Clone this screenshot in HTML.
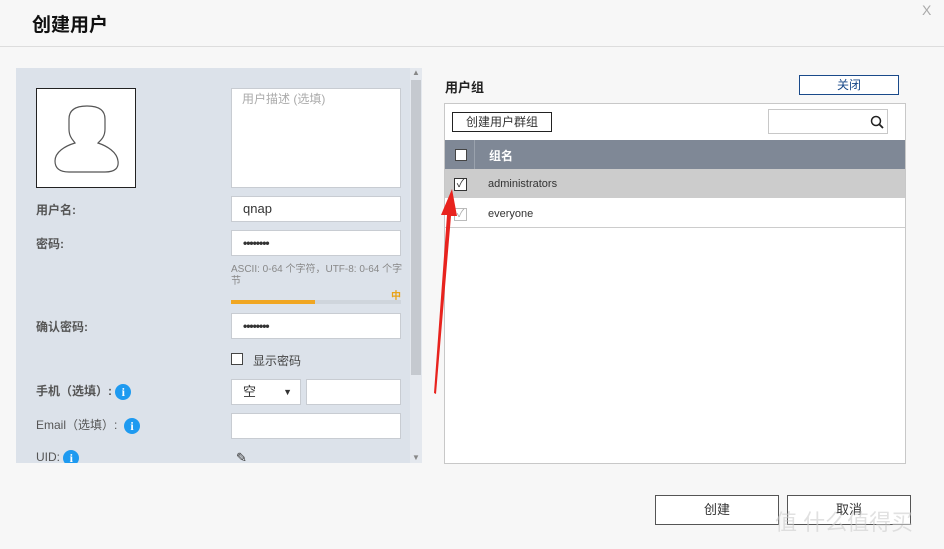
<!DOCTYPE html>
<html><head><meta charset="utf-8"><style>
*{box-sizing:border-box;margin:0;padding:0}
body{width:944px;height:549px;background:#f7f7f7;font-family:"Liberation Sans","Noto Sans CJK SC",sans-serif;position:relative;overflow:hidden;color:#333}
.a{position:absolute}
.inp{position:absolute;background:#fff;border:1px solid #c8ccd2;font-size:13px;padding-left:11px;line-height:24px}
.lbl{position:absolute;font-size:12px;color:#555;font-weight:bold}
.info{display:inline-block;width:16px;height:16px;border-radius:50%;background:#1e9af0;color:#fff;font-size:12px;text-align:center;line-height:16px;font-weight:bold;vertical-align:middle;font-family:"Liberation Serif",serif}
.btn{position:absolute;border:1px solid #555;background:#fff;font-size:13px;text-align:center}
.dots{font-size:12px;font-weight:bold;letter-spacing:-1px}
</style></head><body>
<div class="a" style="left:32px;top:10px;font-size:19px;font-weight:bold;color:#111">创建用户</div>
<div class="a" style="left:922px;top:2px;font-size:14px;color:#aaa">X</div>
<div class="a" style="left:0;top:46px;width:944px;height:1px;background:#ddd"></div>

<div class="a" style="left:16px;top:68px;width:406px;height:395px;background:#dce2ea"></div>
<div class="a" style="left:410px;top:68px;width:12px;height:395px;background:#e4e8ee"></div>
<div class="a" style="left:411px;top:80px;width:10px;height:295px;background:#c5c9cf"></div>
<div class="a" style="left:412px;top:68px;font-size:8px;color:#888">▲</div>
<div class="a" style="left:412px;top:453px;font-size:8px;color:#888">▼</div>

<div class="a" style="left:36px;top:88px;width:100px;height:100px;background:#fff;border:1px solid #222">
<svg width="100" height="100" viewBox="0 0 100 100"><path d="M50 17 C37 17 32 22 32 30 L32 40 C32 48 36 51 38 54 C28 57 18 63 18 72 C18 79 22 83 32 83 L68 83 C78 83 82 79 81 72 C80 63 70 57 61 54 C64 51 68 48 68 40 L68 30 C68 22 63 17 50 17 Z" fill="none" stroke="#555" stroke-width="1.2"/></svg></div>
<div class="inp" style="left:231px;top:88px;width:170px;height:100px;color:#aaa;font-size:12px;line-height:20px;padding-left:10px">用户描述 (选填)</div>

<div class="lbl" style="left:36px;top:201px">用户名:</div>
<div class="inp" style="left:231px;top:196px;width:170px;height:26px">qnap</div>
<div class="lbl" style="left:36px;top:235px">密码:</div>
<div class="inp dots" style="left:231px;top:230px;width:170px;height:26px">••••••••</div>
<div class="a" style="left:231px;top:264px;font-size:10px;color:#888;line-height:12px;width:175px">ASCII: 0-64 个字符，UTF-8: 0-64 个字节</div>
<div class="a" style="left:391px;top:287px;font-size:10px;color:#e8a317;font-weight:bold">中</div>
<div class="a" style="left:231px;top:300px;width:170px;height:4px;background:#cfd5dc"></div>
<div class="a" style="left:231px;top:300px;width:84px;height:4px;background:#f0a622"></div>
<div class="lbl" style="left:36px;top:318px">确认密码:</div>
<div class="inp dots" style="left:231px;top:313px;width:170px;height:26px">••••••••</div>
<div class="a" style="left:231px;top:353px;width:12px;height:12px;border:1px solid #444;background:#fff"></div>
<div class="a" style="left:253px;top:352px;font-size:12px;color:#444">显示密码</div>
<div class="lbl" style="left:36px;top:382px">手机（选填）: <span class="info">i</span></div>
<div class="inp" style="left:231px;top:379px;width:70px;height:26px">空<span style="position:absolute;right:8px;font-size:9px">▼</span></div>
<div class="inp" style="left:306px;top:379px;width:95px;height:26px"></div>
<div class="lbl" style="left:36px;top:416px;font-weight:normal">Email（选填）: &nbsp;<span class="info">i</span></div>
<div class="inp" style="left:231px;top:413px;width:170px;height:26px"></div>
<div class="lbl" style="left:36px;top:450px;font-weight:normal;height:13px;overflow:hidden">UID: <span class="info">i</span></div>
<div class="a" style="left:236px;top:450px;font-size:13px;color:#333;height:13px;overflow:hidden">✎</div>

<div class="a" style="left:445px;top:77px;font-size:13px;font-weight:bold;color:#222">用户组</div>
<div class="a" style="left:799px;top:75px;width:100px;height:20px;border:1px solid #1a4a8a;background:#fff;color:#1a4a8a;font-size:12px;text-align:center;line-height:18px">关闭</div>
<div class="a" style="left:444px;top:103px;width:462px;height:361px;border:1px solid #c8c8c8;background:#fff"></div>
<div class="btn" style="left:452px;top:112px;width:100px;height:20px;border-color:#222;font-size:12px;line-height:18px">创建用户群组</div>
<div class="a" style="left:768px;top:109px;width:120px;height:25px;border:1px solid #c8c8c8;background:#fff"><svg class="a" style="left:101px;top:5px" width="14" height="14"><circle cx="6" cy="6" r="4.5" fill="none" stroke="#222" stroke-width="1.5"/><path d="M9 9 L13 13" stroke="#222" stroke-width="1.8"/></svg></div>
<div class="a" style="left:445px;top:140px;width:460px;height:29px;background:#7f8896"></div>
<div class="a" style="left:474px;top:140px;width:1px;height:29px;background:#9aa2ad"></div>
<div class="a" style="left:455px;top:149px;width:12px;height:12px;background:#fff;border:1px solid #444"></div>
<div class="a" style="left:489px;top:147px;font-size:12px;color:#fff;font-weight:bold">组名</div>
<div class="a" style="left:445px;top:169px;width:460px;height:29px;background:#cccccc"></div>
<div class="a" style="left:454px;top:178px;width:13px;height:13px;background:#fff;border:1px solid #333;font-size:11px;line-height:11px;text-align:center">✓</div>
<div class="a" style="left:488px;top:178px;font-size:11px;color:#333">administrators</div>
<div class="a" style="left:454px;top:208px;width:13px;height:13px;border:1px solid #bbb;color:#aaa;font-size:11px;line-height:11px;text-align:center">✓</div>
<div class="a" style="left:488px;top:208px;font-size:11px;color:#333">everyone</div>
<div class="a" style="left:445px;top:227px;width:460px;height:1px;background:#ccc"></div>

<svg class="a" style="left:425px;top:185px" width="40" height="215"><path d="M9 208 L22 30 L16 30 L27 4 L32 31 L26 31 L11 209 Z" fill="#e8231e"/></svg>

<div class="btn" style="left:655px;top:495px;width:124px;height:30px;line-height:28px">创建</div>
<div class="btn" style="left:787px;top:495px;width:124px;height:30px;line-height:28px">取消</div>
<div class="a" style="left:775px;top:505px;font-size:22px;color:rgba(205,205,205,0.6)">值 什么值得买</div>
</body></html>
